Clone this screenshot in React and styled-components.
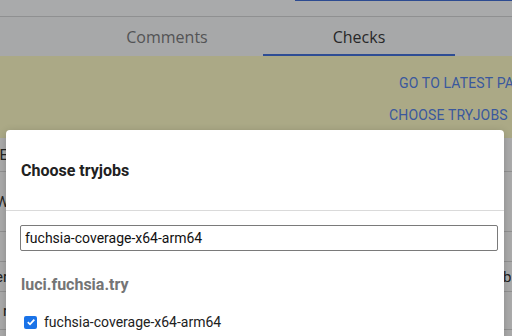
import React from 'react';
import styled, { createGlobalStyle } from 'styled-components';

const GlobalStyle = createGlobalStyle`
    html, body {
        margin: 0;
        padding: 0;
        width: 512px;
        height: 336px;
        overflow: hidden;
        background: #fff;
        font-family: Roboto, "Liberation Sans", sans-serif;
    }
`;

const Page = styled.div`
    position: relative;
    width: 512px;
    height: 336px;
    overflow: hidden;
    background: #fff;
`;

const TopBar = styled.div`
    height: 16px;
    background: #fdfeff;
    border-bottom: 1px solid #d6d7d9;
    box-shadow: 0 1px 1px rgba(0, 0, 0, 0.08);
    display: flex;
    justify-content: flex-end;
`;

const TopLink = styled.div`
    width: 217px;
    height: 1px;
    background: #4470d8;
`;

const TabBar = styled.div`
    display: flex;
    height: 39px;
    padding-left: 71px;
    background: #fafbfc;
`;

const Tab = styled.div`
    width: 192px;
    display: flex;
    align-items: center;
    justify-content: center;
    font-family: "Open Sans", sans-serif;
    font-size: 16px;
    color: ${props => (props.active ? '#3a3b3d' : '#7c7d80')};
    border-bottom: 2px solid ${props => (props.active ? '#4573dd' : 'transparent')};
    box-sizing: border-box;
    padding-top: 2px;
`;

const Banner = styled.div`
    height: 82px;
    background: #fffdc8;
    display: flex;
    justify-content: flex-end;
    overflow: hidden;
`;

const Actions = styled.div`
    width: 123px;
    display: flex;
    flex-direction: column;
    padding-top: 18px;
    gap: 14px;
`;

const ActionButton = styled.div`
    white-space: nowrap;
    font-size: 14px;
    letter-spacing: 0.15px;
    line-height: 18px;
    color: #5784ea;
    text-transform: uppercase;
    padding-left: ${props => props.indent || 0}px;
`;

const Row = styled.div`
    height: ${props => props.h}px;
    border-bottom: 1px solid #d8d8d8;
    box-sizing: border-box;
    display: flex;
    justify-content: space-between;
    align-items: center;
    font-size: 15px;
    color: #333;
    padding: 0 1px 0 0;
`;

const Edge = styled.span`
    width: ${props => props.w || 8}px;
    overflow: hidden;
    direction: ${props => (props.right ? 'ltr' : 'rtl')};
    white-space: nowrap;
`;

const Backdrop = styled.div`
    position: absolute;
    inset: 0;
    background: rgba(0, 0, 0, 0.33);
`;

const Dialog = styled.div`
    position: absolute;
    left: 6px;
    top: 130px;
    width: 498px;
    height: 240px;
    background: #fff;
    border-radius: 4px 4px 0 0;
    box-shadow: 0 2px 8px rgba(0, 0, 0, 0.2);
`;

const DialogHeader = styled.div`
    height: 81px;
    box-sizing: border-box;
    border-bottom: 1px solid #dadada;
    display: flex;
    align-items: center;
    padding: 0 15px;
    font-size: 16px;
    font-weight: 700;
    color: #212121;
`;

const DialogBody = styled.div`
    padding: 14px 6px 0 14px;
`;

const SearchInput = styled.input`
    display: block;
    width: 100%;
    height: 26px;
    box-sizing: border-box;
    border: 1px solid #7a7a7a;
    border-radius: 2px;
    padding: 0 4px;
    font-family: Roboto, "Liberation Sans", sans-serif;
    font-size: 14px;
    color: #111;
    outline: none;
`;

const GroupTitle = styled.div`
    margin-top: 24px;
    margin-left: 1px;
    font-size: 16px;
    font-weight: 700;
    color: #757575;
    line-height: 20px;
`;

const CheckRow = styled.label`
    display: flex;
    align-items: center;
    gap: 7px;
    margin-top: 19px;
    padding-left: 4px;
    font-size: 14px;
    color: #212121;
`;

const Box = styled.span`
    width: 13px;
    height: 13px;
    border-radius: 2px;
    background: #1a73e8;
    display: flex;
    align-items: center;
    justify-content: center;
`;

export default function App() {
    return (
        <Page>
            <GlobalStyle />
            <TopBar>
                <TopLink />
            </TopBar>
            <TabBar>
                <Tab>Comments</Tab>
                <Tab active>Checks</Tab>
            </TabBar>
            <Banner>
                <Actions>
                    <ActionButton indent={10}>Go to latest patchset</ActionButton>
                    <ActionButton>Choose tryjobs</ActionButton>
                </Actions>
            </Banner>
            <Row h={34}><Edge>E</Edge><Edge right /></Row>
            <Row h={60}><Edge w={9}>W</Edge><Edge right /></Row>
            <Row h={30}><Edge /><Edge right /></Row>
            <Row h={30}><Edge>er</Edge><Edge right>b</Edge></Row>
            <Row h={38}><Edge>r</Edge><Edge right /></Row>
            <Row h={40} />
            <Backdrop />
            <Dialog>
                <DialogHeader>Choose tryjobs</DialogHeader>
                <DialogBody>
                    <SearchInput defaultValue="fuchsia-coverage-x64-arm64" />
                    <GroupTitle>luci.fuchsia.try</GroupTitle>
                    <CheckRow>
                        <Box>
                            <svg width="10" height="10" viewBox="0 0 10 10">
                                <path d="M1.8 5.2 L4 7.3 L8.3 2.6" fill="none" stroke="#fff" strokeWidth="1.8" />
                            </svg>
                        </Box>
                        fuchsia-coverage-x64-arm64
                    </CheckRow>
                </DialogBody>
            </Dialog>
        </Page>
    );
}
